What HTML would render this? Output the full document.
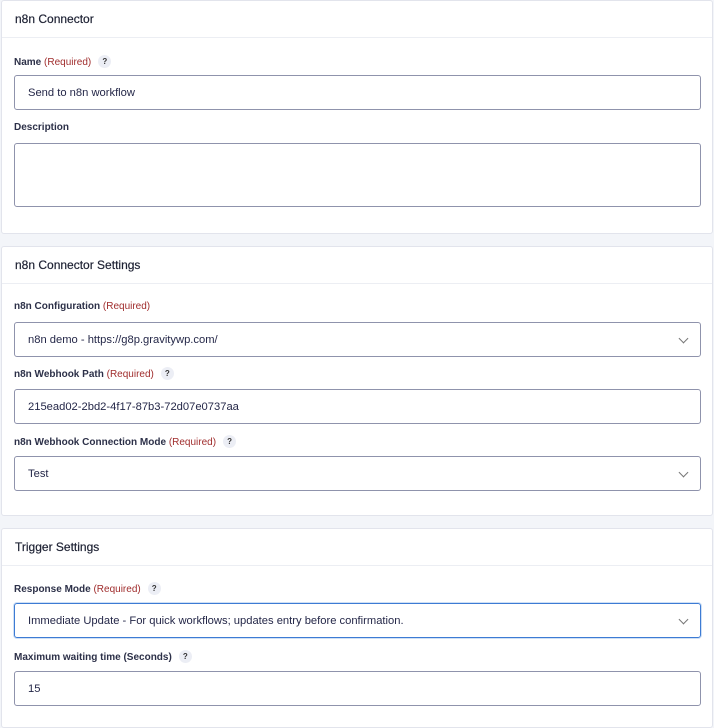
<!DOCTYPE html>
<html><head><meta charset="utf-8"><style>
*{box-sizing:border-box;margin:0;padding:0}
body{width:714px;height:713px;overflow:hidden;background:#f3f5f9;font-family:"Liberation Sans",sans-serif;color:#242748;position:relative}
.panel{position:absolute;left:1px;width:712px;background:#fff;border:1px solid #e2e4ec;border-radius:3px}
.hd{position:absolute;left:0;right:0;top:0;height:37px;border-bottom:1px solid #eceef3;font-size:12px;padding:11px 0 0 13px;color:#1d2133;-webkit-text-stroke:0.2px #1d2133}
.lbl{position:absolute;left:12px;font-size:10px;font-weight:bold;color:#2c3048}
.lbl .r{color:#a02d2d;font-weight:normal}
.q{display:inline-block;width:13px;height:13px;border-radius:50%;background:#eceef5;color:#333;font-size:8px;text-align:center;line-height:13px;margin-left:7px;vertical-align:1px}
.in{position:absolute;left:12px;width:687px;height:35px;border:1px solid #8f93ac;border-radius:3px;font-size:11.2px;padding:0 13px;line-height:34px;color:#242748}
.sel::after{content:"";position:absolute;right:13px;top:12px;width:6px;height:6px;border-right:1.2px solid #777;border-bottom:1.2px solid #777;transform:rotate(45deg)}
.focus{border-color:#3d7bd4;box-shadow:0 0 0 1px #cfe0f5}
</style></head><body>
<div class="panel" style="top:0;height:234px">
<div class="hd">n8n Connector</div>
<div class="lbl" style="top:54px">Name <span class="r">(Required)</span><span class="q">?</span></div>
<div class="in" style="top:74px">Send to n8n workflow</div>
<div class="lbl" style="top:121px">Description</div>
<div class="in" style="top:142px;height:64px"></div>
</div>
<div class="panel" style="top:246px;height:270px">
<div class="hd">n8n Connector Settings</div>
<div class="lbl" style="top:54px">n8n Configuration <span class="r">(Required)</span></div>
<div class="in sel" style="top:75px">n8n demo - https://g8p.gravitywp.com/</div>
<div class="lbl" style="top:120px">n8n Webhook Path <span class="r">(Required)</span><span class="q">?</span></div>
<div class="in" style="top:142px">215ead02-2bd2-4f17-87b3-72d07e0737aa</div>
<div class="lbl" style="top:188px">n8n Webhook Connection Mode <span class="r">(Required)</span><span class="q">?</span></div>
<div class="in sel" style="top:209px">Test</div>
</div>
<div class="panel" style="top:528px;height:200px">
<div class="hd">Trigger Settings</div>
<div class="lbl" style="top:53px">Response Mode <span class="r">(Required)</span><span class="q">?</span></div>
<div class="in sel focus" style="top:74px">Immediate Update - For quick workflows; updates entry before confirmation.</div>
<div class="lbl" style="top:121px">Maximum waiting time (Seconds)<span class="q">?</span></div>
<div class="in" style="top:142px">15</div>
</div>
</body></html>
